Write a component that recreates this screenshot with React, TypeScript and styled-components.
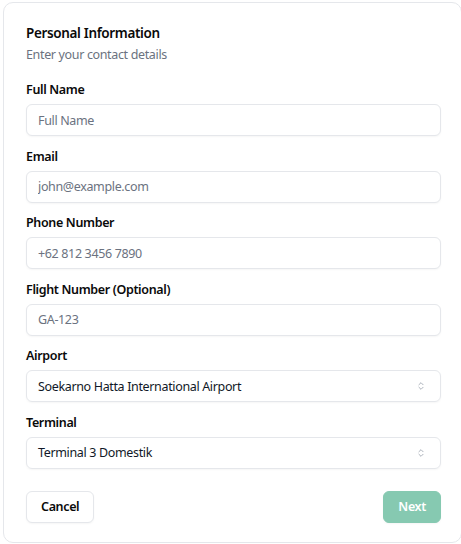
import React from "react";
import styled, { createGlobalStyle } from "styled-components";

const Global = createGlobalStyle`
  html, body { margin: 0; padding: 0; background: #ffffff; }
  body { font-family: "Noto Sans", "Open Sans", sans-serif; color: #111827; letter-spacing: -0.35px; }
  * { box-sizing: border-box; }
`;

const Page = styled.div`
  padding: 2px 0 0 3px;
`;

const Card = styled.div`
  width: 459px;
  height: 541px;
  border: 1px solid #e5e7eb;
  border-radius: 10px;
  background: #fff;
  padding: 20px 20px 0 22px;
  display: flex;
  flex-direction: column;
`;

const Header = styled.div`
  display: flex;
  flex-direction: column;
  gap: 3px;
  margin-bottom: 18px;
`;

const Title = styled.h2`
  margin: 0;
  font-size: 13.5px;
  font-weight: 600;
  line-height: 20px;
  color: #0a0a0a;
`;

const Subtitle = styled.p`
  margin: 0;
  font-size: 12.5px;
  line-height: 18px;
  color: #6b7280;
`;

const Fields = styled.div`
  display: flex;
  flex-direction: column;
  gap: 12.6px;
`;

const Field = styled.div`
  display: flex;
  flex-direction: column;
  gap: 6px;
`;

const Label = styled.label`
  font-size: 12.5px;
  font-weight: 600;
  line-height: 16px;
  color: #0a0a0a;
`;

const Input = styled.input`
  height: 32px;
  width: 100%;
  border: 1px solid #e5e7eb;
  border-radius: 6px;
  padding: 0 11px;
  font-family: inherit;
  font-size: 12.5px;
  letter-spacing: -0.35px;
  color: #111827;
  background: #fff;
  box-shadow: 0 1px 2px rgba(0, 0, 0, 0.04);
  outline: none;
  &::placeholder { color: #6b7280; }
`;

const SelectBox = styled.div`
  height: 32px;
  border: 1px solid #e5e7eb;
  border-radius: 6px;
  padding: 0 14px 0 11px;
  display: flex;
  align-items: center;
  justify-content: space-between;
  font-size: 12.5px;
  color: #111827;
  box-shadow: 0 1px 2px rgba(0, 0, 0, 0.04);
`;

const Footer = styled.div`
  display: flex;
  justify-content: space-between;
  align-items: center;
  margin-top: 22px;
`;

const Button = styled.button<{ $primary?: boolean }>`
  height: 32px;
  padding: 0 14px;
  border-radius: 6px;
  font-family: inherit;
  font-size: 12.5px;
  font-weight: 600;
  letter-spacing: -0.35px;
  cursor: pointer;
  border: 1px solid ${(p) => (p.$primary ? "#86c9b1" : "#e5e7eb")};
  background: ${(p) => (p.$primary ? "#86c9b1" : "#ffffff")};
  color: ${(p) => (p.$primary ? "#ffffff" : "#0a0a0a")};
  box-shadow: 0 1px 2px rgba(0, 0, 0, 0.04);
`;

const Chevrons = () => (
  <svg width="10" height="10" viewBox="0 0 24 24" fill="none" stroke="#9ca3af" strokeWidth="2" strokeLinecap="round" strokeLinejoin="round">
    <path d="m7 15 5 5 5-5" />
    <path d="m7 9 5-5 5 5" />
  </svg>
);

const inputs = [
  { label: "Full Name", placeholder: "Full Name" },
  { label: "Email", placeholder: "john@example.com" },
  { label: "Phone Number", placeholder: "+62 812 3456 7890" },
  { label: "Flight Number (Optional)", placeholder: "GA-123" },
];

const selects = [
  { label: "Airport", value: "Soekarno Hatta International Airport" },
  { label: "Terminal", value: "Terminal 3 Domestik" },
];

export default function App() {
  return (
    <>
      <Global />
      <Page>
        <Card>
          <Header>
            <Title>Personal Information</Title>
            <Subtitle>Enter your contact details</Subtitle>
          </Header>
          <Fields>
            {inputs.map((f) => (
              <Field key={f.label}>
                <Label>{f.label}</Label>
                <Input placeholder={f.placeholder} />
              </Field>
            ))}
            {selects.map((s) => (
              <Field key={s.label}>
                <Label>{s.label}</Label>
                <SelectBox>
                  <span>{s.value}</span>
                  <Chevrons />
                </SelectBox>
              </Field>
            ))}
          </Fields>
          <Footer>
            <Button>Cancel</Button>
            <Button $primary>Next</Button>
          </Footer>
        </Card>
      </Page>
    </>
  );
}
